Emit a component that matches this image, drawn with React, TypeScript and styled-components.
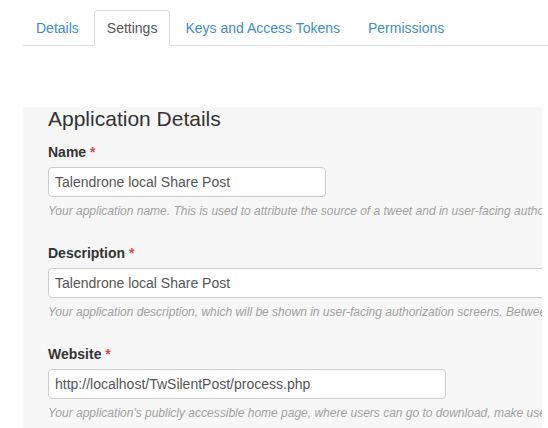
import React from "react";
import styled, { createGlobalStyle } from "styled-components";

const GlobalStyle = createGlobalStyle`
  html, body {
    margin: 0;
    padding: 0;
    background: #ffffff;
    font-family: "Liberation Sans", Arial, Helvetica, sans-serif;
    color: #333333;
  }
  * { box-sizing: border-box; }
`;

const Page = styled.div`
  width: 548px;
  height: 428px;
  overflow: hidden;
  padding: 10px 0 0 23px;
`;

const Tabs = styled.ul`
  display: flex;
  list-style: none;
  margin: 0;
  padding: 0;
  border-bottom: 1px solid #dddddd;
`;

const TabItem = styled.li`
  margin: 0 2px -1px 0;
`;

const TabLink = styled.a<{ $active?: boolean }>`
  display: block;
  padding: 7px 12px;
  font-size: 14px;
  line-height: 20px;
  text-decoration: none;
  border: 1px solid transparent;
  border-radius: 4px 4px 0 0;
  cursor: pointer;
  color: ${(p) => (p.$active ? "#555555" : "#428bca")};
  background: ${(p) => (p.$active ? "#ffffff" : "transparent")};
  border-color: ${(p) =>
    p.$active ? "#dddddd #dddddd transparent" : "transparent"};
`;

const Panel = styled.section`
  margin-top: 61px;
  width: 519px;
  height: 400px;
  background: #f7f7f7;
  border-radius: 4px;
  padding: 0 0 0 25px;
  overflow: hidden;
`;

const Heading = styled.h3`
  margin: 0 0 12px;
  font-size: 21px;
  line-height: 1.1;
  font-weight: 500;
  color: #333333;
`;

const FormGroup = styled.div`
  display: flex;
  flex-direction: column;
  align-items: flex-start;
  margin-bottom: 23px;
`;

const Label = styled.label`
  display: block;
  font-size: 14px;
  line-height: 20px;
  font-weight: bold;
  margin-bottom: 5px;
  color: #333333;
`;

const Required = styled.span`
  color: #e0474c;
  font-weight: bold;
`;

const TextInput = styled.input<{ $width: number }>`
  display: block;
  flex-shrink: 0;
  width: ${(p) => p.$width}px;
  height: 30px;
  padding: 5px 6px;
  font-family: "Liberation Sans", Arial, Helvetica, sans-serif;
  font-size: 14px;
  line-height: 18px;
  color: #555555;
  background: #ffffff;
  border: 1px solid #cccccc;
  border-radius: 4px;
  outline: none;
`;

const Help = styled.p`
  margin: 6px 0 0;
  font-size: 12px;
  line-height: 17px;
  font-style: italic;
  color: #a0a0a0;
  white-space: nowrap;
`;

const tabs = ["Details", "Settings", "Keys and Access Tokens", "Permissions"];

const fields = [
  {
    label: "Name",
    value: "Talendrone local Share Post",
    width: 278,
    help: "Your application name. This is used to attribute the source of a tweet and in user-facing authorization screens. 32 characters max.",
  },
  {
    label: "Description",
    value: "Talendrone local Share Post",
    width: 620,
    help: "Your application description, which will be shown in user-facing authorization screens. Between 10 and 200 characters max.",
  },
  {
    label: "Website",
    value: "http://localhost/TwSilentPost/process.php",
    width: 398,
    help: "Your application's publicly accessible home page, where users can go to download, make use of, or find out more information about your application.",
  },
];

export default function App() {
  return (
    <>
      <GlobalStyle />
      <Page>
        <Tabs>
          {tabs.map((t) => (
            <TabItem key={t}>
              <TabLink $active={t === "Settings"}>{t}</TabLink>
            </TabItem>
          ))}
        </Tabs>
        <Panel>
          <Heading>Application Details</Heading>
          {fields.map((f) => (
            <FormGroup key={f.label}>
              <Label>
                {f.label} <Required>*</Required>
              </Label>
              <TextInput $width={f.width} defaultValue={f.value} readOnly />
              <Help>{f.help}</Help>
            </FormGroup>
          ))}
        </Panel>
      </Page>
    </>
  );
}
